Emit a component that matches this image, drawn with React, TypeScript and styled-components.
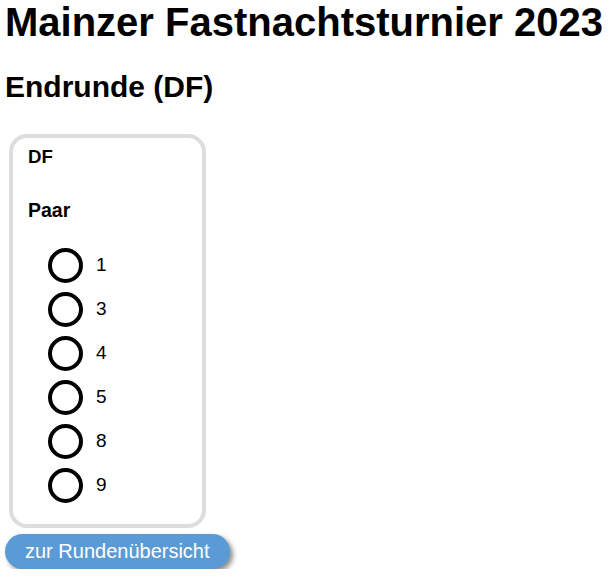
import React from "react";
import styled, { createGlobalStyle } from "styled-components";

const Global = createGlobalStyle`
  body {
    margin: 0;
    background: #ffffff;
    font-family: "Liberation Sans", Arial, sans-serif;
    color: #000000;
  }
`;

const Page = styled.div`
  padding: 0 5px;
  display: flex;
  flex-direction: column;
  align-items: flex-start;
`;

const Title = styled.h1`
  margin: 0;
  font-size: 40px;
  font-weight: bold;
  line-height: normal;
`;

const Subtitle = styled.h2`
  margin: 25px 0 30px;
  font-size: 30px;
  font-weight: bold;
  line-height: normal;
`;

const Card = styled.div`
  box-sizing: border-box;
  width: 197px;
  margin-left: 4px;
  border: 4px solid #dddddd;
  border-radius: 18px;
  padding: 8px 15px 21px;
  display: flex;
  flex-direction: column;
`;

const CardTitle = styled.h3`
  margin: 0 0 31px;
  font-size: 18.7px;
  font-weight: bold;
  line-height: normal;
`;

const GroupLabel = styled.div`
  font-size: 19.5px;
  font-weight: bold;
  line-height: normal;
  margin-bottom: 26px;
`;

const OptionList = styled.div`
  display: flex;
  flex-direction: column;
  gap: 9px;
  padding-left: 20px;
`;

const Option = styled.label`
  display: flex;
  align-items: center;
  gap: 13px;
  font-size: 19px;
  line-height: normal;
  cursor: pointer;
`;

const Circle = styled.span<{ $checked?: boolean }>`
  box-sizing: border-box;
  width: 35px;
  height: 35px;
  border: 4px solid #000000;
  border-radius: 50%;
  background: ${(p) => (p.$checked ? "#000" : "#fff")};
  flex: none;
`;

const NumberText = styled.span`
  position: relative;
  top: -1px;
`;

const BackButton = styled.button`
  margin-top: 6px;
  border: none;
  border-radius: 18px;
  background: #5b9bd5;
  color: #ffffff;
  font-family: "Liberation Sans", Arial, sans-serif;
  font-size: 20px;
  line-height: 23px;
  padding: 6px 20px 6px;
  box-shadow: 3px 3px 5px rgba(0, 0, 0, 0.45);
  cursor: pointer;
`;

const pairs = [1, 3, 4, 5, 8, 9];

export default function App() {
  return (
    <>
      <Global />
      <Page>
        <Title>Mainzer Fastnachtsturnier 2023</Title>
        <Subtitle>Endrunde (DF)</Subtitle>
        <Card>
          <CardTitle>DF</CardTitle>
          <GroupLabel>Paar</GroupLabel>
          <OptionList>
            {pairs.map((n) => (
              <Option key={n}>
                <Circle />
                <NumberText>{n}</NumberText>
              </Option>
            ))}
          </OptionList>
        </Card>
        <BackButton>zur Rundenübersicht</BackButton>
      </Page>
    </>
  );
}
